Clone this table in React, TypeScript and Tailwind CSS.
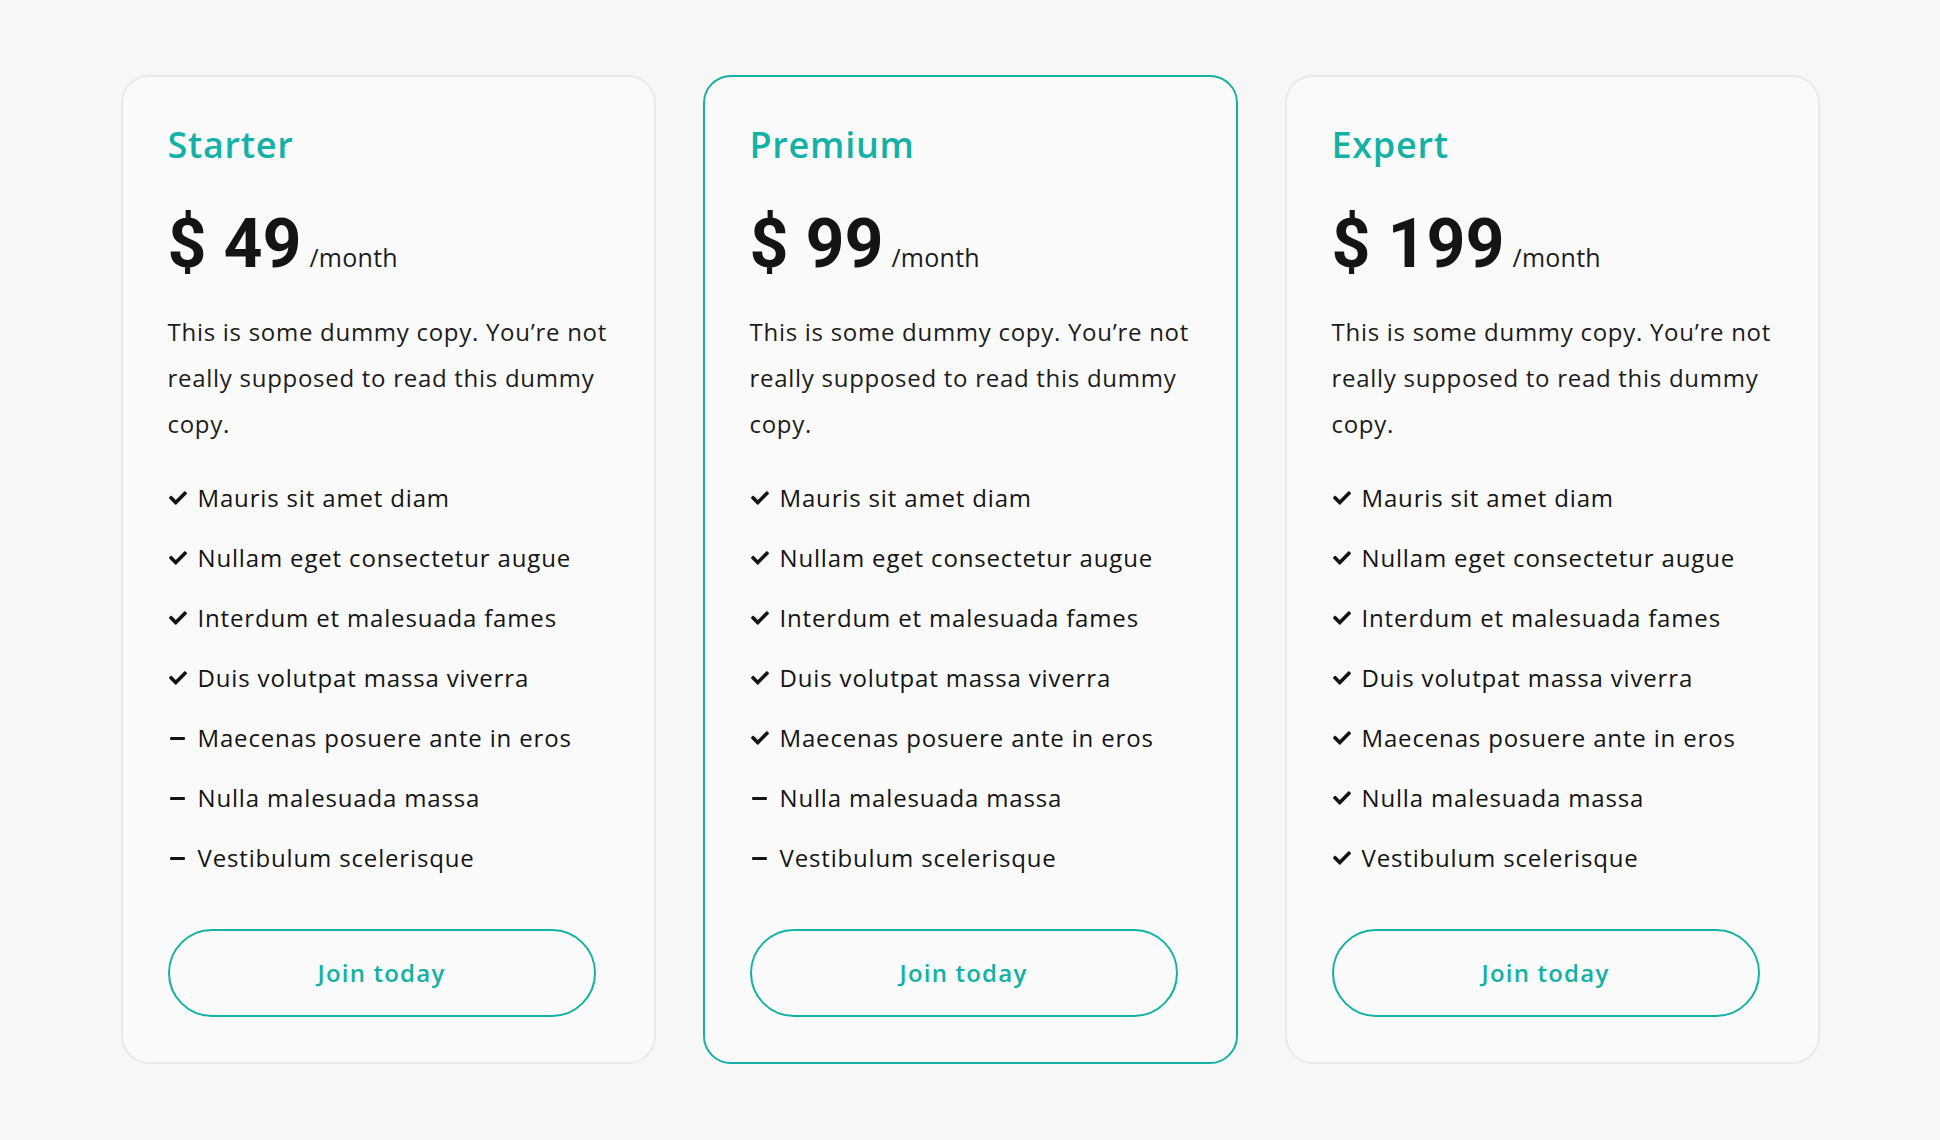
import { FaCheck, FaMinus } from "react-icons/fa";

type Plan = {
  name: string;
  price: string;
  included: number;
  featured?: boolean;
};

const features = [
  "Mauris sit amet diam",
  "Nullam eget consectetur augue",
  "Interdum et malesuada fames",
  "Duis volutpat massa viverra",
  "Maecenas posuere ante in eros",
  "Nulla malesuada massa",
  "Vestibulum scelerisque",
];

const plans: Plan[] = [
  { name: "Starter", price: "49", included: 4 },
  { name: "Premium", price: "99", included: 5, featured: true },
  { name: "Expert", price: "199", included: 7 },
];

function PlanCard({ plan }: { plan: Plan }) {
  return (
    <div
      className={`flex flex-col rounded-[28px] border-2 bg-[#fafafa] px-[45px] pt-[44px] pb-[45px] ${
        plan.featured ? "border-[#14b1a6]" : "border-[#e9e9e9]"
      }`}
    >
      <h2 className="text-[36px] leading-[48px] font-semibold tracking-[0.02em] text-[#14b1a6]">
        {plan.name}
      </h2>
      <div className="mt-[39px] flex items-baseline gap-[8px] text-[#141414]">
        <span className="font-['Roboto',sans-serif] text-[68px] leading-[72px] font-bold">
          $ {plan.price}
        </span>
        <span className="text-[25px] font-normal tracking-[0.01em] text-[#1c1c1c]">/month</span>
      </div>
      <p className="mt-[29px] whitespace-nowrap text-[24px] leading-[46px] tracking-[0.03em] text-[#1c1c1c]">
        This is some dummy copy. You’re not
        <br />
        really supposed to read this dummy
        <br />
        copy.
      </p>
      <ul className="mt-[21px] flex flex-col">
        {features.map((f, i) => (
          <li
            key={f}
            className="flex h-[60px] items-center gap-[10px] text-[24px] leading-[34px] tracking-[0.035em] text-[#141414]"
          >
            <span className="flex w-[20px] justify-center">
              {i < plan.included ? (
                <FaCheck className="h-[18px] w-[18px]" />
              ) : (
                <FaMinus className="h-[17px] w-[17px]" />
              )}
            </span>
            {f}
          </li>
        ))}
      </ul>
      <button className="mt-[41px] h-[88px] w-[428px] rounded-full border-2 border-[#14b1a6] text-[24px] font-semibold tracking-[0.05em] text-[#14b1a6]">
        Join today
      </button>
    </div>
  );
}

export default function App() {
  return (
    <div className="flex min-h-screen justify-center bg-[#f7f7f7] pt-[75px] font-['Open_Sans',sans-serif]">
      <div className="grid w-[1699px] grid-cols-3 items-start gap-[47px]">
        {plans.map((p) => (
          <PlanCard key={p.name} plan={p} />
        ))}
      </div>
    </div>
  );
}
